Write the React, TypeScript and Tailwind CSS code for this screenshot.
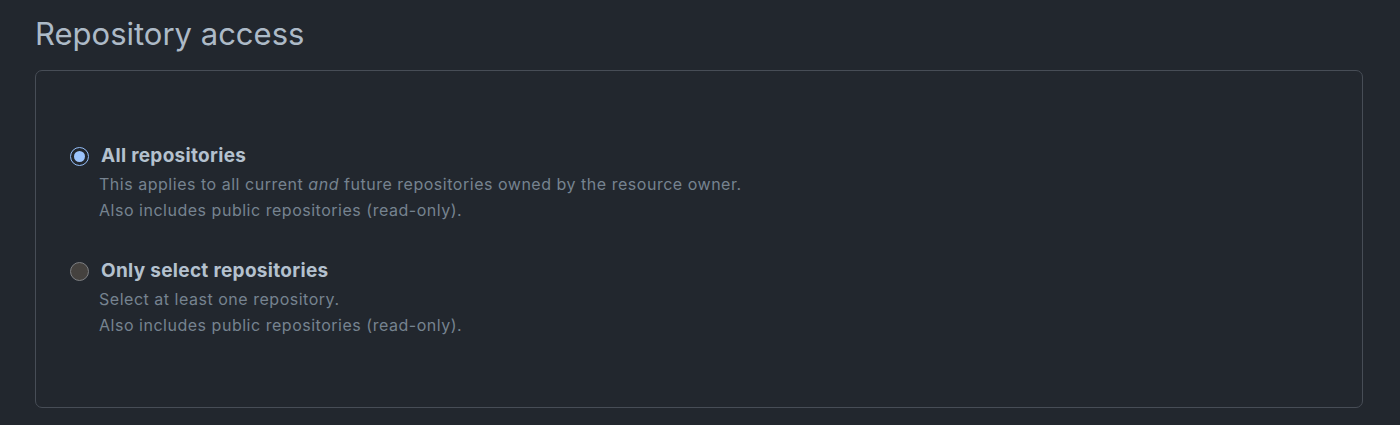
import React from 'react'

const options = [
    {
        id: 'all',
        label: 'All repositories',
        checked: true,
        lines: [
            <>This applies to all current <em>and</em> future repositories owned by the resource owner.</>,
            <>Also includes public repositories (read-only).</>,
        ],
    },
    {
        id: 'select',
        label: 'Only select repositories',
        checked: false,
        lines: [<>Select at least one repository.</>, <>Also includes public repositories (read-only).</>],
    },
]

function Radio({ checked }: { checked: boolean }) {
    if (checked) {
        return (
            <span className="flex h-[19px] w-[19px] shrink-0 items-center justify-center rounded-full border-[1.5px] border-[#94bdf7] bg-[#22272e]">
                <span className="h-[11px] w-[11px] rounded-full bg-[#9cc4fd]" />
            </span>
        )
    }
    return <span className="h-[19px] w-[19px] shrink-0 rounded-full border-[1.5px] border-[#7d7f82] bg-[#45423f]" />
}

export default function App() {
    return (
        <div className="min-h-[425px] w-full bg-[#22272e] px-[35px] pt-[15px] font-['Inter','Liberation_Sans',sans-serif]">
            <h2 className="text-[31px] leading-[38px] font-normal text-[#adbac7]">Repository access</h2>

            <div className="mt-[17px] mr-[2px] rounded-[7px] border border-[#474d56] pt-[73px] pb-[69px] pl-[34px]">
                <div className="flex flex-col gap-[36px]">
                    {options.map((opt) => (
                        <div key={opt.id}>
                            <div className="flex items-center gap-[12px] h-[24px]">
                                <Radio checked={opt.checked} />
                                <span className="text-[19px] leading-[24px] font-bold tracking-[0.3px] text-[#b4c1ce]">
                                    {opt.label}
                                </span>
                            </div>
                            <div className="mt-[3px] pl-[29px] text-[16px] leading-[26px] tracking-[0.52px] text-[#768390]">
                                {opt.lines.map((line, i) => (
                                    <p key={i}>{line}</p>
                                ))}
                            </div>
                        </div>
                    ))}
                </div>
            </div>
        </div>
    )
}
